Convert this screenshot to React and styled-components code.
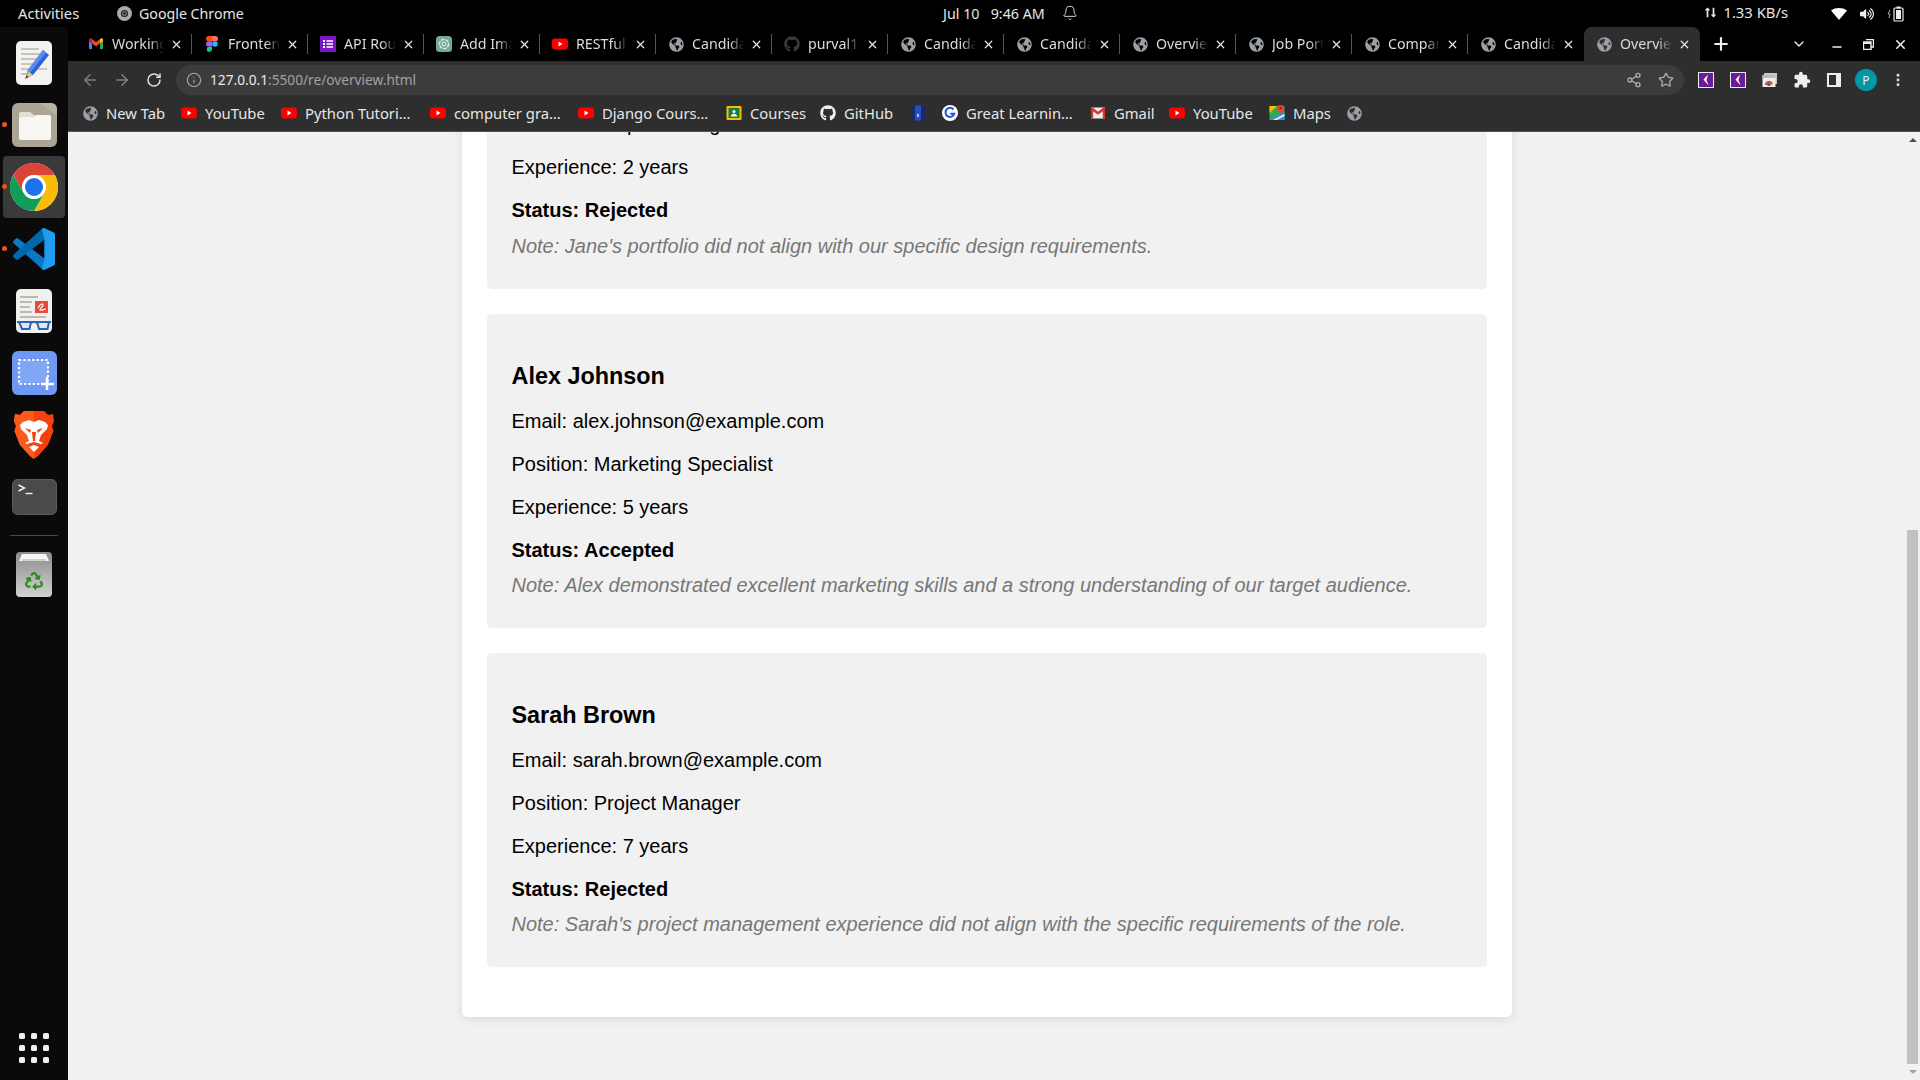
import React from "react";
import styled, { createGlobalStyle } from "styled-components";
import { ArrowLeft, ArrowRight, RotateCw, Info, Share2, Star, MoreVertical, ChevronDown, Plus, X, Minus, Bell } from "lucide-react";
import { FaGlobeAmericas, FaGithub, FaVolumeUp, FaRecycle, FaLongArrowAltUp, FaLongArrowAltDown } from "react-icons/fa";
import { MdExtension } from "react-icons/md";

const Global = createGlobalStyle`
  html, body { margin: 0; padding: 0; height: 100%; overflow: hidden; background: #f1f1f1; }
  #root { height: 100%; }
  * { box-sizing: border-box; }
`;

const Screen = styled.div`
  width: 1920px; height: 1080px; display: flex; flex-direction: column; overflow: hidden;
  font-family: "Noto Sans", sans-serif; background: #000;
`;
const TopBar = styled.header`
  height: 27px; flex: none; display: flex; align-items: center; background: #000; color: #e6e6e6; font-size: 14.3px;
`;
const TopLeft = styled.div`
  width: 943px; display: flex; align-items: center; padding-left: 18px;
`;
const Activities = styled.span`
  width: 99px; font-size: 14.7px; margin-bottom: 2px;
`;
const AppName = styled.div`
  display: flex; align-items: center; gap: 7px; font-size: 14.2px;
`;
const Clock = styled.div`
  display: flex; align-items: center; width: 170px; gap: 0;
  span { width: 119px; white-space: pre; }
  svg { margin-bottom: 2px; }
`;
const TopRight = styled.div`
  flex: 1; display: flex; align-items: center; justify-content: flex-end; padding-right: 16px;
`;
const NetRate = styled.div`
  display: flex; align-items: center; gap: 4px; margin: 0 43px 3px 0; font-size: 14.8px;
`;
const StatusIcons = styled.div`
  display: flex; align-items: center; gap: 13px;
`;
const Main = styled.div`
  flex: 1; display: flex; min-height: 0;
`;
const Dock = styled.nav`
  width: 68px; flex: none; background: #0a0a0a; display: flex; flex-direction: column; align-items: center; padding-top: 5px;
`;
const DockItem = styled.div`
  position: relative; width: 62px; height: 62px; flex: none; display: flex; align-items: center; justify-content: center;
  border-radius: 4px; background: ${(p) => (p.$active ? "#3a3a3a" : "transparent")};
`;
const RunDot = styled.i`
  position: absolute; left: -1px; top: 28px; width: 5px; height: 5px; border-radius: 50%; background: #e95420;
`;
const DockRule = styled.div`
  width: 48px; height: 1px; background: #4a4a4a; margin: 7px 0 0; flex: none;
`;
const Trash = styled(DockItem)`
  margin-top: 7px;
`;
const AppGrid = styled.div`
  margin-top: auto; margin-bottom: 17px; display: grid; grid-template-columns: repeat(3, 6px); gap: 6px;
  i { width: 6px; height: 6px; border-radius: 1.5px; background: #eee; display: block; }
`;
const Win = styled.div`
  flex: 1; min-width: 0; display: flex; flex-direction: column;
`;
const TabStrip = styled.div`
  height: 34px; flex: none; display: flex; background: #000; padding-left: 8px; align-items: stretch;
`;
const TabItem = styled.div`
  width: 116px; flex: none; position: relative; display: flex; align-items: center; padding-left: 12px; gap: 8px;
  color: #dcdcdc; font-size: 14.2px;
  background: ${(p) => (p.$active ? "#2e2e2e" : "transparent")};
  border-radius: ${(p) => (p.$active ? "8px 8px 0 0" : "0")};
  &::after {
    content: ""; position: absolute; right: 0; top: 7px; bottom: 7px; width: 1px;
    background: ${(p) => (p.$sep ? "#555" : "transparent")};
  }
`;
const TabTitle = styled.span`
  width: 52px; overflow: hidden; white-space: nowrap; margin-bottom: 2px;
  mask-image: linear-gradient(to right, #000 72%, transparent 100%);
`;
const TabClose = styled.span`
  display: flex; margin-left: -2.5px; color: #e8e8e8;
`;
const StripRight = styled.div`
  flex: 1; display: flex; align-items: center; color: #eee;
`;
const NewTab = styled.span`
  display: flex; margin-left: 11px;
`;
const TabMenu = styled.span`
  display: flex; margin-left: 60px;
`;
const WinBtns = styled.div`
  display: flex; align-items: center; margin-left: 23px; gap: 19px;
`;
const Toolbar = styled.div`
  height: 36px; flex: none; display: flex; align-items: center; background: #2e2e2e; padding: 2px 6px 0;
`;
const NavBtn = styled.span`
  width: 32px; height: 32px; flex: none; display: flex; align-items: center; justify-content: center;
  color: ${(p) => (p.$dim ? "#7d7f82" : "#e3e3e3")};
`;
const Omnibox = styled.div`
  flex: 1; height: 30px; margin: 0 6px; border-radius: 15px; background: #3c3c3c; display: flex; align-items: center;
  padding: 0 10px; gap: 8px; color: #a9abad; font-size: 13.7px;
`;
const Url = styled.span`
  flex: 1; color: #a0a2a5; margin-bottom: 1px; b { font-weight: 400; color: #e8eaed; }
`;
const OmniIcons = styled.div`
  display: flex; gap: 16px; color: #a9abad;
`;
const Avatar = styled.span`
  width: 22px; height: 22px; border-radius: 50%; background: #0097a7; color: #e8f4f5; font-size: 12px;
  display: flex; align-items: center; justify-content: center;
`;
const BookmarkBar = styled.div`
  height: 35px; flex: none; display: flex; align-items: center; background: #2e2e2e; padding: 0 0 2px 14px;
  border-bottom: 1px solid #555; color: #e6e6e6; font-size: 14.8px;
`;
const Bookmark = styled.div`
  width: ${(p) => p.$w}px; flex: none; display: flex; align-items: center; gap: 8px; white-space: nowrap;
`;
const Viewport = styled.div`
  flex: 1; min-height: 0; display: flex; background: #f1f1f1;
`;
const Page = styled.main`
  flex: 1; min-width: 0; display: flex; flex-direction: column; justify-content: flex-end; align-items: center; overflow: hidden;
  padding-bottom: 63px; font-family: "Liberation Sans", Arial, sans-serif;
`;
const Panel = styled.section`
  width: 1050px; flex: none; background: #fff; border-radius: 5px; padding: 25px 25px 50px;
  box-shadow: 0 2px 10px rgba(0, 0, 0, 0.1); display: flex; flex-direction: column; gap: 25px;
`;
const Card = styled.article`
  height: 314px; background: #f1f1f1; border-radius: 5px; padding: ${(p) => p.$top}px 25px 31px;
`;
const Name = styled.h3`
  margin: 0 0 20px; font-size: 23.4px; line-height: 28px; font-weight: 700; color: #000;
`;
const Line = styled.p`
  margin: 0 0 20px; font-size: 20px; line-height: 23px; color: #000;
`;
const StatusLine = styled(Line)`
  font-weight: 700; margin-bottom: ${(p) => p.$gap}px;
`;
const Note = styled.p`
  margin: 0; font-size: 20px; line-height: 23px; font-style: italic; color: #777;
`;
const ScrollBar = styled.div`
  width: 15px; flex: none; display: flex; flex-direction: column; align-items: center; background: #f1f1f1; padding-top: 6px;
`;
const ArrowUp = styled.i`
  width: 0; height: 0; border-left: 4px solid transparent; border-right: 4px solid transparent; border-bottom: 4px solid #505050;
`;
const Thumb = styled.div`
  width: 11px; height: 534px; margin-top: 388px; background: #c1c1c1;
`;
const ArrowDown = styled.i`
  width: 0; height: 0; margin-top: 6px; border-left: 4px solid transparent; border-right: 4px solid transparent; border-top: 4px solid #a3a3a3;
`;

/* favicons */
const Globe = ({ c = "#9aa0a6" }) => <FaGlobeAmericas size={15} color={c} style={{ flex: "none", margin: "0 .5px" }} />;
const Yt = () => (
  <svg width="16" height="16" viewBox="0 0 16 16" style={{ flex: "none" }}>
    <rect x="0" y="2.5" width="16" height="11" rx="3" fill="#f00" />
    <path d="M6.5 5.6 10.5 8l-4 2.4z" fill="#fff" />
  </svg>
);
const Gm = () => (
  <svg width="16" height="16" viewBox="0 0 16 16" style={{ flex: "none" }}>
    <path d="M1 4v9h3V7.5z" fill="#4285f4" />
    <path d="M15 4v9h-3V7.5z" fill="#34a853" />
    <path d="M12 3v4.5L15 5.3V3.6C15 2.4 13.6 2 12.8 2.6z" fill="#fbbc04" />
    <path d="M4 7.5V3l4 3 4-3v4.5l-4 3z" fill="#ea4335" />
    <path d="M1 5.3 4 7.5V3L3.200 2.600C2.400 2 1 2.400 1 3.600z" fill="#c5221f" />
  </svg>
);
const Figma = () => (
  <svg width="16" height="16" viewBox="0 0 12 16" style={{ flex: "none" }}>
    <path d="M2.700 0H6v5.300H2.700a2.650 2.650 0 0 1 0-5.300z" fill="#f24e1e" />
    <path d="M6 0h3.300a2.650 2.650 0 0 1 0 5.300H6z" fill="#ff7262" />
    <path d="M2.700 5.300H6v5.300H2.700a2.650 2.650 0 0 1 0-5.300z" fill="#a259ff" />
    <circle cx="9" cy="8" r="2.800" fill="#1abcfe" />
    <path d="M2.700 10.700H6v2.650a2.650 2.650 0 1 1-3.300-2.650z" fill="#0acf83" />
  </svg>
);
const Forms = () => (
  <svg width="16" height="16" viewBox="0 0 16 16" style={{ flex: "none" }}>
    <rect width="16" height="16" rx="1" fill="#7b16c7" />
    <path d="M3 4h2v2H3zM6.500 4.300H13v1.400H6.500zM3 7h2v2H3zM6.500 7.300H13v1.400H6.500zM3 10h2v2H3zM6.500 10.300H13v1.400H6.500z" fill="#fff" />
  </svg>
);
const Gpt = () => (
  <svg width="16" height="16" viewBox="0 0 16 16" style={{ flex: "none" }}>
    <rect width="16" height="16" rx="3.500" fill="#74aa9c" />
    <circle cx="8" cy="8" r="4.600" fill="none" stroke="#e8f3f0" strokeWidth="1.200" strokeDasharray="3.500 1" />
    <circle cx="8" cy="8" r="2" fill="none" stroke="#e8f3f0" strokeWidth="1" />
  </svg>
);
const CoursesIco = () => (
  <svg width="16" height="16" viewBox="0 0 16 16" style={{ flex: "none" }}>
    <rect x="0.500" y="1" width="15" height="14" rx="1" fill="#fbbc04" />
    <rect x="2.500" y="3" width="11" height="10" fill="#188038" />
    <circle cx="8" cy="6.500" r="1.500" fill="#fff" />
    <path d="M4.800 11.500c.3-2 1.600-2.800 3.200-2.800s2.900.8 3.200 2.800z" fill="#fff" />
  </svg>
);
const BlueIco = () => (
  <svg width="16" height="16" viewBox="0 0 16 16" style={{ flex: "none" }}>
    <rect x="1" y="0.500" width="14" height="15" fill="#1a2a66" />
    <rect x="5" y="0.500" width="6" height="15" fill="#2a4cc0" />
    <rect x="7" y="9" width="2" height="3" fill="#9fc0ff" />
  </svg>
);
const GlIco = () => (
  <svg width="16" height="16" viewBox="0 0 16 16" style={{ flex: "none" }}>
    <circle cx="8" cy="8" r="8" fill="#fff" />
    <path d="M11.500 4.500A4.500 4.500 0 1 0 12.300 8.800H8.300" fill="none" stroke="#1a56db" strokeWidth="2" />
  </svg>
);
const GmailIco = () => (
  <svg width="16" height="16" viewBox="0 0 16 16" style={{ flex: "none" }}>
    <rect x="1" y="2.500" width="14" height="11" fill="#eee" />
    <path d="M1 2.500v11h2.200V6.300L8 9.800l4.800-3.500v7.200H15v-11h-1.600L8 6.700 2.600 2.500z" fill="#d9322a" />
  </svg>
);
const MapsIco = () => (
  <svg width="16" height="16" viewBox="0 0 16 16" style={{ flex: "none" }}>
    <rect x="0.500" y="1" width="15" height="14" fill="#34a853" />
    <path d="M0.500 15 15.500 7V15z" fill="#4285f4" />
    <path d="M4 15 15.500 9v2l-8 4z" fill="#f1f3f4" />
    <path d="M0.500 1H8L0.500 8z" fill="#fbbc04" />
    <path d="M11.500 0a3.200 3.200 0 0 1 3.200 3.200C14.700 5.500 11.500 8.500 11.500 8.500S8.300 5.500 8.300 3.200A3.200 3.200 0 0 1 11.500 0z" fill="#ea4335" />
    <circle cx="11.500" cy="3.200" r="1.100" fill="#a50e0e" />
  </svg>
);
const ChromeMark = ({ size = 48, mono }) => (
  <svg width={size} height={size} viewBox="0 0 48 48" style={{ flex: "none" }}>
    <circle cx="24" cy="24" r="24" fill={mono ? "#aaa" : "#fff"} />
    {!mono && <path d="M24 12h20.800A24 24 0 0 0 3.200 12L13.600 30A12 12 0 0 1 24 12z" fill="#db4437" />}
    {!mono && <path d="M44.800 12H24a12 12 0 0 1 10.400 18L24 48A24 24 0 0 0 44.800 12z" fill="#fbbc05" />}
    {!mono && <path d="M3.200 12A24 24 0 0 0 24 48L34.400 30A12 12 0 0 1 13.600 30z" fill="#0f9d58" />}
    <circle cx="24" cy="24" r="11.500" fill={mono ? "#222" : "#fff"} />
    <circle cx="24" cy="24" r={mono ? 7 : 9} fill={mono ? "#aaa" : "#1a73e8"} />
    {mono && <circle cx="24" cy="24" r="4.500" fill="#222" />}
  </svg>
);
const EditorIcon = () => (
  <svg width="36" height="44" viewBox="0 0 36 44">
    <rect width="36" height="44" rx="5" fill="#f2f2f0" />
    <path d="M5 8h18M5 13h26M5 18h22M5 23h16M5 28h26M5 33h8" stroke="#c9c5b8" strokeWidth="2" />
    <path d="M27 9l6 5-16 20-6 3-1-1 2-7z" fill="#2f62d9" />
    <path d="M27 9l3 2.500-16 20.500-3-2z" fill="#5a8cf0" />
    <path d="M12 30l5 4-6.500 3.500z" fill="#e8c08a" />
    <path d="M10.500 34.500l2 1.500-3.500 2z" fill="#333" />
  </svg>
);
const FilesIcon = () => (
  <svg width="45" height="44" viewBox="0 0 45 44">
    <rect width="45" height="44" rx="6" fill="#aca596" />
    <path d="M28 0h11a6 6 0 0 1 6 6v6z" fill="#b9b3a6" />
    <path d="M7 11a2 2 0 0 1 2-2h9l5 4v2H7z" fill="#e3dfd5" />
    <path d="M7 16a2 2 0 0 1 2-2h12l3-2h13a2 2 0 0 1 2 2v21a2 2 0 0 1-2 2H9a2 2 0 0 1-2-2z" fill="#f7f6f3" />
  </svg>
);
const VsIcon = () => (
  <svg width="42" height="42" viewBox="0 0 100 100">
    <path d="M96.500 10.800 75.900.9a6.200 6.200 0 0 0-7.100 1.200L29.400 38.100 12.200 25a4.200 4.200 0 0 0-5.300.2L1.400 30.300a4.200 4.200 0 0 0 0 6.200L16.300 50 1.400 63.500a4.200 4.200 0 0 0 0 6.200l5.500 5a4.200 4.200 0 0 0 5.300.2l17.200-13.100 39.400 36a6.200 6.200 0 0 0 7.100 1.200l20.600-9.900a6.200 6.200 0 0 0 3.500-5.600V16.400a6.200 6.200 0 0 0-3.500-5.600zM75 72.700 45.100 50 75 27.300z" fill="#0a78c2" />
    <path d="M1.400 63.500a4.200 4.200 0 0 0 0 6.200l5.500 5a4.200 4.200 0 0 0 5.300.2L75 27.300V2.400L68.800 2.100 29.400 38.100z" fill="#0065a9" opacity=".9" />
    <path d="M68.800 2.100a6.200 6.200 0 0 1 7.100-1.200l20.600 9.900a6.200 6.200 0 0 1 3.500 5.600v67.200a6.200 6.200 0 0 1-3.500 5.600l-20.600 9.900a6.200 6.200 0 0 1-7.100-1.200L75 72.700V27.300z" fill="#1f9cf0" />
  </svg>
);
const ReaderIcon = () => (
  <svg width="36" height="44" viewBox="0 0 36 44">
    <rect width="36" height="44" rx="5" fill="#f0f0ee" />
    <path d="M4 8h18M4 13h12M4 18h10M4 23h12M4 28h26" stroke="#bdb9ae" strokeWidth="2" />
    <rect x="19" y="12" width="13" height="12" fill="#e8493f" />
    <path d="M22 19c2-4 5-5 5-3s-4 4-3 5 4-1 6-1" stroke="#fff" strokeWidth="1.200" fill="none" />
    <path d="M1 33h34" stroke="#2a66b8" strokeWidth="2" />
    <path d="M3 33h12l-1.500 7H6zM21 33h12l-1.500 7H23z" fill="#dfe7ef" stroke="#2a66b8" strokeWidth="2" />
    <path d="M15 34c2-1 4-1 6 0" stroke="#2a66b8" strokeWidth="1.500" fill="none" />
  </svg>
);
const ShotIcon = () => (
  <svg width="45" height="44" viewBox="0 0 45 44">
    <rect width="45" height="44" rx="6" fill="#6f98f2" />
    <rect x="7" y="9" width="29" height="24" fill="#80a6f5" stroke="#fff" strokeWidth="2.200" strokeDasharray="2.200 2.200" />
    <path d="M35 26v13M29 33h13" stroke="#fff" strokeWidth="2.400" />
  </svg>
);
const BraveIcon = () => (
  <svg width="40" height="48" viewBox="0 0 40 48">
    <path d="M10 0h20l4 4 5-1 1 7-2 5 1.500 5L34 34l-10 11-4 3-4-3L6 34 .5 20 2 15 0 10l1-7 5 1z" fill="#f4420f" />
    <path d="M20 48l-4-3L6 34 .5 20 2 15 0 10l1-7 5 1 4-4h10z" fill="#fb5a1a" />
    <path d="M9 11l6-2 5 2 5-2 6 2 3 3-1 4-6 6-2 6 4 2-9 5-9-5 4-2-2-6-6-6-1-4z" fill="#fff" />
    <path d="M11 17l6 2-1 3zM29 17l-6 2 1 3zM18 21h4l-1 9h-2z" fill="#f4420f" />
    <path d="M13 33l7-2 7 2-7 7z" fill="#f4420f" />
    <path d="M15 36l5-2 5 2-5 5z" fill="#fff" />
  </svg>
);
const TermIcon = () => (
  <svg width="45" height="36" viewBox="0 0 45 36">
    <rect x=".5" y=".5" width="44" height="35" rx="5" fill="#4a4a4a" stroke="#5c5c5c" strokeWidth="1" />
    <path d="M6.500 6l6 3-6 3" stroke="#eee" strokeWidth="1.400" fill="none" />
    <path d="M13.500 14.500h7" stroke="#eee" strokeWidth="1.400" />
  </svg>
);
const TrashIcon = () => (
  <div style={{ position: "relative", width: 36, height: 45 }}>
    <svg width="36" height="45" viewBox="0 0 36 45" style={{ display: "block" }}>
      <defs>
        <linearGradient id="tr" x1="0" y1="0" x2="0" y2="1">
          <stop offset="0" stopColor="#8c8c8c" />
          <stop offset="1" stopColor="#d2d2d2" />
        </linearGradient>
      </defs>
      <rect width="36" height="45" rx="4" fill="url(#tr)" />
      <path d="M6 2h24l3 7H3z" fill="#f6f6f6" />
      <path d="M6 7h24v2H6z" fill="#cfcfcf" />
    </svg>
    <FaRecycle size={18} color="#2f8a1f" style={{ position: "absolute", left: 9, top: 20 }} />
  </div>
);
const KIco = () => (
  <svg width="16" height="16" viewBox="0 0 16 16">
    <rect x=".5" y=".5" width="15" height="15" fill="#6a1b9a" stroke="#eee" />
    <path d="M10 2.500 5.500 7.500 10.500 13.500 8.500 8z" fill="#fff" />
  </svg>
);
const WinIco = () => (
  <svg width="16" height="16" viewBox="0 0 16 16">
    <rect x="2" y="1" width="13" height="11" fill="#c8c8c8" />
    <rect x="0.500" y="3" width="13" height="12" fill="#eee" />
    <rect x="0.500" y="3" width="13" height="3" fill="#bbb" />
    <path d="M3 13a4 4 0 0 1 8 0z" fill="#db4437" />
    <path d="M7 13h4a4 4 0 0 0-.5-2z" fill="#fbbc05" />
    <rect x="5.500" y="11.500" width="3" height="2.500" fill="#1a73e8" />
  </svg>
);
const SidePanelIco = () => (
  <svg width="16" height="16" viewBox="0 0 16 16">
    <rect x="1" y="1" width="14" height="14" fill="#eee" />
    <rect x="3" y="3" width="7" height="10" fill="#2e2e2e" />
  </svg>
);
const RestoreIco = () => (
  <svg width="11" height="11" viewBox="0 0 11 11">
    <path d="M3 .5h7.500V8H8M.5 3H8v7.500H.5z" fill="none" stroke="#eee" strokeWidth="1.400" />
    <path d="M.5 3H8v2H.5z" fill="#eee" />
  </svg>
);
const WifiIco = () => (
  <svg width="16" height="12" viewBox="0 0 16 12"><path d="M0 2.500C4.500-.8 11.500-.8 16 2.500L8 12z" fill="#fff" /></svg>
);
const BatteryIco = () => (
  <svg width="17" height="16" viewBox="0 0 17 16">
    <path d="M3 4 1 8h2l-1 4" stroke="#aaa" fill="none" />
    <rect x="7" y="2" width="9" height="13" rx="1" fill="none" stroke="#eee" strokeWidth="1.200" />
    <rect x="9.500" y="0.500" width="4" height="2" fill="#eee" />
    <rect x="9" y="4" width="5" height="9" fill="#eee" />
  </svg>
);

const tabs = [
  ["Working", <Gm />], ["Frontend", <Figma />], ["API Routes", <Forms />], ["Add Image", <Gpt />], ["RESTful", <Yt />],
  ["Candidate", <Globe />], ["purval1", <FaGithub size={16} color="#3a3a3a" style={{ flex: "none" }} />], ["Candidate", <Globe />], ["Candidate", <Globe />],
  ["Overview", <Globe />], ["Job Portal", <Globe />], ["Company", <Globe />], ["Candidate", <Globe />], ["Overview", <Globe />, true],
];
const bookmarks = [
  [99, "New Tab", <Globe />], [100, "YouTube", <Yt />], [149, "Python Tutori…", <Yt />], [148, "computer gra…", <Yt />],
  [148, "Django Cours…", <Yt />], [94, "Courses", <CoursesIco />], [90, "GitHub", <FaGithub size={16} color="#eee" style={{ flex: "none" }} />],
  [32, "", <BlueIco />], [148, "Great Learnin…", <GlIco />], [79, "Gmail", <GmailIco />], [100, "YouTube", <Yt />], [77, "Maps", <MapsIco />], [20, "", <Globe />],
];
const people = [
  { name: "Jane Smith", email: "jane.smith@example.com", pos: "Graphic Designer", exp: "2 years", status: "Rejected", top: 47, gap: 13, note: "Jane's portfolio did not align with our specific design requirements." },
  { name: "Alex Johnson", email: "alex.johnson@example.com", pos: "Marketing Specialist", exp: "5 years", status: "Accepted", top: 48, gap: 12, note: "Alex demonstrated excellent marketing skills and a strong understanding of our target audience." },
  { name: "Sarah Brown", email: "sarah.brown@example.com", pos: "Project Manager", exp: "7 years", status: "Rejected", top: 48, gap: 12, note: "Sarah's project management experience did not align with the specific requirements of the role." },
];

export default function App() {
  return (
    <Screen>
      <Global />
      <TopBar>
        <TopLeft>
          <Activities>Activities</Activities>
          <AppName><ChromeMark size={15} mono />Google Chrome</AppName>
        </TopLeft>
        <Clock>
          <span>{"Jul 10   9:46 AM"}</span>
          <Bell size={16} strokeWidth={1.400} />
        </Clock>
        <TopRight>
          <NetRate>
            <span style={{ display: "flex" }}><FaLongArrowAltUp size={11} style={{ marginRight: -5 }} /><FaLongArrowAltDown size={11} /></span>
            1.33 KB/s
          </NetRate>
          <StatusIcons>
            <WifiIco />
            <FaVolumeUp size={14} color="#eee" />
            <BatteryIco />
          </StatusIcons>
        </TopRight>
      </TopBar>
      <Main>
        <Dock>
          <DockItem><EditorIcon /></DockItem>
          <DockItem><RunDot /><FilesIcon /></DockItem>
          <DockItem $active><RunDot /><ChromeMark /></DockItem>
          <DockItem><RunDot /><VsIcon /></DockItem>
          <DockItem><ReaderIcon /></DockItem>
          <DockItem><ShotIcon /></DockItem>
          <DockItem><BraveIcon /></DockItem>
          <DockItem><TermIcon /></DockItem>
          <DockRule />
          <Trash><TrashIcon /></Trash>
          <AppGrid>{Array.from({ length: 9 }, (_, i) => <i key={i} />)}</AppGrid>
        </Dock>
        <Win>
          <TabStrip>
            {tabs.map(([t, ic, active], i) => (
              <TabItem key={i} $active={active} $sep={!active && i < 12}>
                {ic}
                <TabTitle>{t}</TabTitle>
                <TabClose><X size={13} strokeWidth={2.200} /></TabClose>
              </TabItem>
            ))}
            <StripRight>
              <NewTab><Plus size={20} strokeWidth={2.600} /></NewTab>
              <TabMenu><ChevronDown size={16} /></TabMenu>
              <WinBtns>
                <Minus size={14} strokeWidth={2.200} style={{ marginTop: 5 }} />
                <RestoreIco />
                <X size={15} strokeWidth={2.400} />
              </WinBtns>
            </StripRight>
          </TabStrip>
          <Toolbar>
            <NavBtn $dim><ArrowLeft size={18} /></NavBtn>
            <NavBtn $dim><ArrowRight size={18} /></NavBtn>
            <NavBtn><RotateCw size={16} strokeWidth={2.200} /></NavBtn>
            <Omnibox>
              <Info size={16} strokeWidth={1.600} />
              <Url><b>127.0.0.1</b>:5500/re/overview.html</Url>
              <OmniIcons>
                <Share2 size={16} />
                <Star size={16} />
              </OmniIcons>
            </Omnibox>
            <NavBtn><KIco /></NavBtn>
            <NavBtn><KIco /></NavBtn>
            <NavBtn><WinIco /></NavBtn>
            <NavBtn><MdExtension size={18} color="#eee" /></NavBtn>
            <NavBtn><SidePanelIco /></NavBtn>
            <NavBtn><Avatar>P</Avatar></NavBtn>
            <NavBtn><MoreVertical size={16} strokeWidth={2.400} /></NavBtn>
          </Toolbar>
          <BookmarkBar>
            {bookmarks.map(([w, t, ic], i) => (
              <Bookmark key={i} $w={w}>{ic}{t && <span>{t}</span>}</Bookmark>
            ))}
          </BookmarkBar>
          <Viewport>
            <Page>
              <Panel>
                {people.map((p) => (
                  <Card key={p.name} $top={p.top}>
                    <Name>{p.name}</Name>
                    <Line>Email: {p.email}</Line>
                    <Line>Position: {p.pos}</Line>
                    <Line>Experience: {p.exp}</Line>
                    <StatusLine $gap={p.gap}>Status: {p.status}</StatusLine>
                    <Note>Note: {p.note}</Note>
                  </Card>
                ))}
              </Panel>
            </Page>
            <ScrollBar>
              <ArrowUp />
              <Thumb />
              <ArrowDown />
            </ScrollBar>
          </Viewport>
        </Win>
      </Main>
    </Screen>
  );
}
